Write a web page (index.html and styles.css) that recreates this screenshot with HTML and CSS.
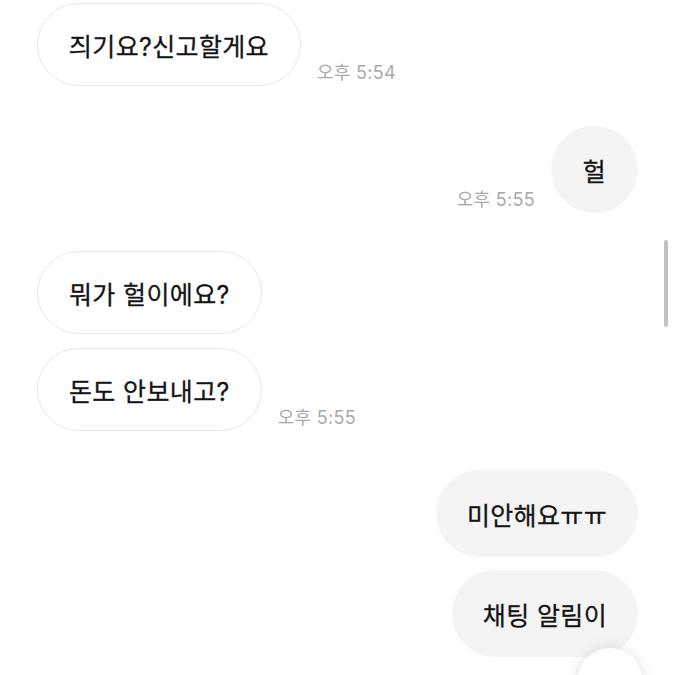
FILE: index.html
```html
<!DOCTYPE html>
<html lang="ko">
<head>
<meta charset="utf-8">
<link rel="stylesheet" href="styles.css">
</head>
<body>
<div class="chat">
  <div class="row in r1">
    <div class="bubble in-b">즤기요?신고할게요</div>
    <span class="time">오후 5:54</span>
  </div>
  <div class="row out r2">
    <span class="time">오후 5:55</span>
    <div class="bubble out-b round">헐</div>
  </div>
  <div class="row in r3">
    <div class="bubble in-b">뭐가 헐이에요?</div>
  </div>
  <div class="row in r4">
    <div class="bubble in-b">돈도 안보내고?</div>
    <span class="time">오후 5:55</span>
  </div>
  <div class="row out r5">
    <div class="bubble out-b tall">미안해요ㅠㅠ</div>
  </div>
  <div class="row out r6">
    <div class="bubble out-b tall">채팅 알림이</div>
  </div>
</div>
<div class="scrollbar"></div>
<div class="fab-clip"><div class="fab"></div></div>
</body>
</html>
```
FILE: styles.css
```css
html, body {
  margin: 0;
  padding: 0;
  background: #ffffff;
  overflow: hidden;
  height: 675px;
}
body {
  font-family: "Inter", "Noto Sans CJK KR", sans-serif;
  color: #151515;
  position: relative;
}
.chat {
  display: flex;
  flex-direction: column;
  padding: 3px 37px 0 37px;
  height: 672px;
  overflow: hidden;
}
.row {
  display: flex;
  align-items: flex-end;
  gap: 16px;
  flex-shrink: 0;
}
.row.out {
  justify-content: flex-end;
}
.r2 { margin-top: 40px; }
.r3 { margin-top: 38px; }
.r4 { margin-top: 14px; }
.r5 { margin-top: 39px; }
.r6 { margin-top: 13px; }
.bubble {
  box-sizing: border-box;
  height: 83px;
  padding: 0 31px;
  border-radius: 44px;
  display: flex;
  align-items: center;
  font-size: 25px;
  font-weight: 400;
  letter-spacing: 0.35px;
  white-space: nowrap;
  -webkit-text-stroke: 0.3px #151515;
}
.in-b {
  background: #ffffff;
  border: 1px solid #e6e6e6;
}
.out-b {
  background: #f4f4f4;
  height: 87px;
}
.round {
  width: 87px;
  padding: 0;
  justify-content: center;
}
.time {
  font-size: 18px;
  color: #a9a9a9;
  margin-bottom: 4px;
  line-height: 1;
  letter-spacing: 0.3px;
}
.scrollbar {
  position: absolute;
  left: 664px;
  top: 240px;
  width: 4px;
  height: 87px;
  border-radius: 2px;
  background: #c2c2c2;
}
.fab-clip {
  position: absolute;
  left: 555px;
  top: 630px;
  width: 120px;
  height: 45px;
  overflow: hidden;
}
.fab {
  margin: 18px 0 0 23px;
  width: 64px;
  height: 64px;
  border-radius: 50%;
  background: #ffffff;
  box-shadow: 0 0 16px rgba(0, 0, 0, 0.12);
}
```
